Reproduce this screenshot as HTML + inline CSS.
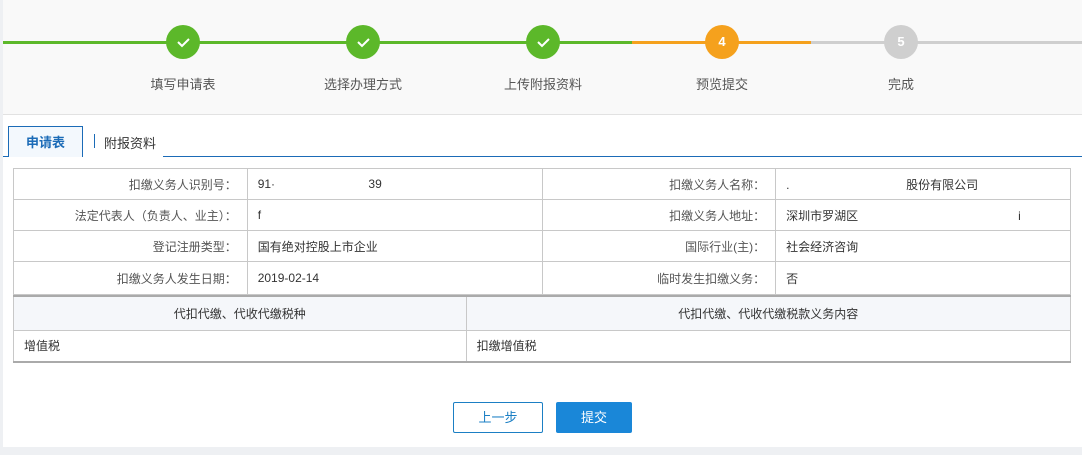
<!DOCTYPE html>
<html><head><meta charset="utf-8"><style>
*{margin:0;padding:0;box-sizing:border-box}
body{width:1082px;height:455px;background:#fff;font-family:"Liberation Sans","Noto Sans CJK SC",sans-serif;font-size:12px;color:#333;position:relative;overflow:hidden}
.a{position:absolute}
.top{left:3px;top:0;width:1079px;height:115px;background:#f9f9f9;border-bottom:1px solid #e2e2e2}
.lb{position:absolute;left:0;top:0;width:3px;height:447px;background:#eef0f3}
.ln{height:3px;top:41px}
.c{width:34px;height:34px;border-radius:50%;top:25px;color:#fff;text-align:center;line-height:34px;font-size:13px;font-weight:bold}
.lab{top:74px;width:120px;text-align:center;font-size:13px;color:#555}
table{border-collapse:collapse;position:absolute;left:13px;width:1058px}
td{border:1px solid #c8c8c8;height:31px;padding:0 10px;font-size:12px}
td.l{text-align:right;color:#555}
</style></head><body>
<div class="lb"></div>
<div class="a top"></div>
<div class="a ln" style="left:3px;width:629px;background:#5cb82a"></div>
<div class="a ln" style="left:632px;width:179px;background:#f5a11d"></div>
<div class="a ln" style="left:811px;width:271px;background:#cfcfcf"></div>
<div class="a c" style="left:166px;background:#5cb82a"><svg width="34" height="34" viewBox="0 0 34 34"><path d="M12 17l4 4 7-7" stroke="#fff" stroke-width="2" fill="none"/></svg></div>
<div class="a c" style="left:346px;background:#5cb82a"><svg width="34" height="34" viewBox="0 0 34 34"><path d="M12 17l4 4 7-7" stroke="#fff" stroke-width="2" fill="none"/></svg></div>
<div class="a c" style="left:526px;background:#5cb82a"><svg width="34" height="34" viewBox="0 0 34 34"><path d="M12 17l4 4 7-7" stroke="#fff" stroke-width="2" fill="none"/></svg></div>
<div class="a c" style="left:705px;background:#f5a11d">4</div>
<div class="a c" style="left:884px;background:#cfcfcf">5</div>
<div class="a lab" style="left:123px">填写申请表</div>
<div class="a lab" style="left:303px">选择办理方式</div>
<div class="a lab" style="left:483px">上传附报资料</div>
<div class="a lab" style="left:662px">预览提交</div>
<div class="a lab" style="left:841px">完成</div>

<div class="a" style="left:3px;top:156px;width:1079px;height:1px;background:#1b6bb7"></div>
<div class="a" style="left:8px;top:126px;width:75px;height:31px;background:#f3f8fd;border:1px solid #1b6bb7;border-bottom:none;text-align:center;line-height:31px;font-size:13px;font-weight:bold;color:#1b6bb7">申请表</div>
<div class="a" style="left:83px;top:126px;width:80px;height:31px;background:#fff"></div>
<div class="a" style="left:94px;top:134px;width:1px;height:14px;background:#1b6bb7"></div>
<div class="a" style="left:104px;top:133px;font-size:13px;color:#333">附报资料</div>

<table style="top:168px;border:1px solid #aaa">
<colgroup><col style="width:234px"><col style="width:296px"><col style="width:233px"><col style="width:295px"></colgroup>
<tr><td class="l">扣缴义务人识别号：</td><td>91·&nbsp;&nbsp;&nbsp;&nbsp;&nbsp;&nbsp;&nbsp;&nbsp;&nbsp;&nbsp;&nbsp;&nbsp;&nbsp;&nbsp;&nbsp;&nbsp;&nbsp;&nbsp;&nbsp;&nbsp;&nbsp;&nbsp;&nbsp;&nbsp;&nbsp;&nbsp;&nbsp;&nbsp;39</td><td class="l">扣缴义务人名称：</td><td>.&nbsp;&nbsp;&nbsp;&nbsp;&nbsp;&nbsp;&nbsp;&nbsp;&nbsp;&nbsp;&nbsp;&nbsp;&nbsp;&nbsp;&nbsp;&nbsp;&nbsp;&nbsp;&nbsp;&nbsp;&nbsp;&nbsp;&nbsp;&nbsp;&nbsp;&nbsp;&nbsp;&nbsp;&nbsp;&nbsp;&nbsp;&nbsp;&nbsp;&nbsp;&nbsp;股份有限公司</td></tr>
<tr><td class="l">法定代表人（负责人、业主）：</td><td>f</td><td class="l">扣缴义务人地址：</td><td>深圳市罗湖区<span style="margin-left:160px">i</span></td></tr>
<tr><td class="l">登记注册类型：</td><td>国有绝对控股上市企业</td><td class="l">国际行业(主)：</td><td>社会经济咨询</td></tr>
<tr><td class="l" style="height:33px">扣缴义务人发生日期：</td><td>2019-02-14</td><td class="l">临时发生扣缴义务：</td><td>否</td></tr>
</table>
<table style="top:295px;border:1px solid #aaa;border-top:2px solid #aaa;border-bottom:2px solid #aaa">
<colgroup><col style="width:453px"><col style="width:605px"></colgroup>
<tr><td style="background:#f5f7fa;text-align:center;height:34px">代扣代缴、代收代缴税种</td><td style="background:#f5f7fa;text-align:center">代扣代缴、代收代缴税款义务内容</td></tr>
<tr><td style="height:32px">增值税</td><td>扣缴增值税</td></tr>
</table>

<div class="a" style="left:453px;top:402px;width:90px;height:31px;border:1px solid #1b7fc4;border-radius:2px;color:#1b7fc4;text-align:center;line-height:29px;font-size:13px">上一步</div>
<div class="a" style="left:556px;top:402px;width:76px;height:31px;background:#1a87d8;border-radius:2px;color:#fff;text-align:center;line-height:31px;font-size:13px">提交</div>
<div class="a" style="left:0;top:447px;width:1082px;height:8px;background:#eef0f3"></div>
</body></html>
